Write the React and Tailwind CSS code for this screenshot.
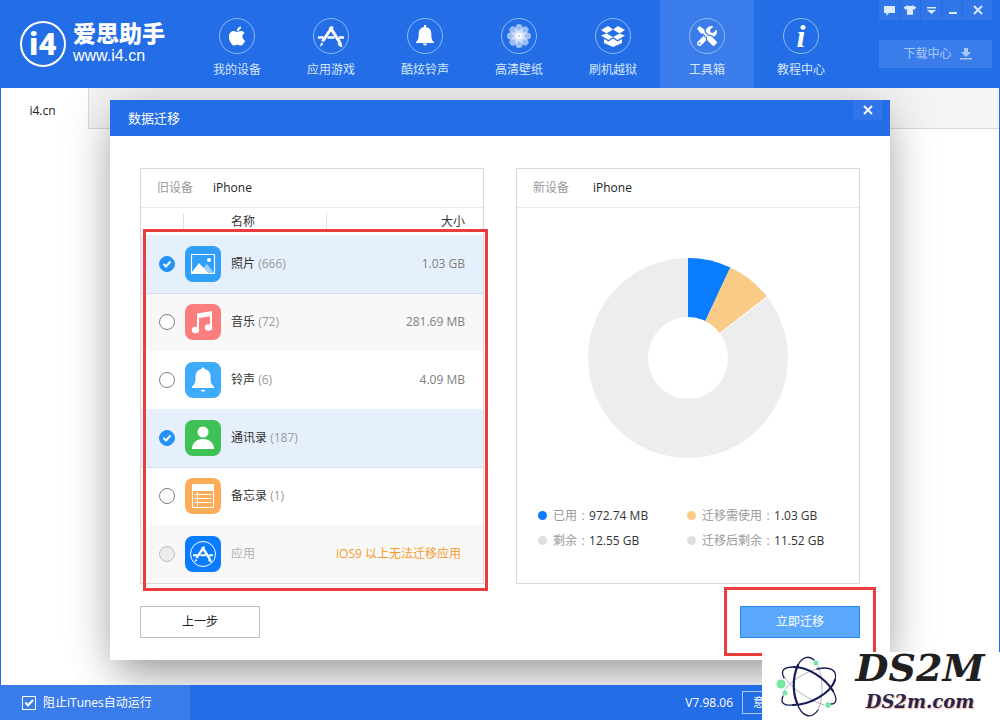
import { FaApple, FaTools, FaTshirt } from "react-icons/fa";

function AppStoreGlyph({ className }) {
  return (
    <svg viewBox="0 0 26 26" className={className} fill="none" stroke="currentColor">
      <path d="M0 14.500h5.500M9.500 14.500h7M21 14.500h5" strokeWidth="2.600" />
      <path d="M14.500 3.500 4.500 18.500" strokeWidth="3" />
      <path d="M12 4l9.500 15" strokeWidth="3.200" />
      <path d="M3 19.500l2.500 1.500L2 24z" fill="currentColor" stroke="none" />
      <path d="M19.500 20.500l3.500-2.200 1.500 5.700c-2 .2-4-1-5-3.500z" fill="currentColor" stroke="none" />
    </svg>
  );
}

function BellGlyph({ className }) {
  return (
    <svg viewBox="0 0 20 22" className={className} fill="currentColor">
      <path d="M9 0h2v2c3.500.5 5.300 3 5.300 6.500 0 5 .7 7 2.700 8.500V18H1v-1c2-1.500 2.700-3.500 2.700-8.500C3.700 5 5.500 2.500 9 2z" />
      <path d="M8 18.500h4c0 1-.8 2-2 2s-2-1-2-2z" />
    </svg>
  );
}

function FlowerGlyph() {
  const petals = [0, 45, 90, 135, 180, 225, 270, 315];
  return (
    <svg viewBox="0 0 24 24" className="w-6 h-6" fill="white">
      {petals.map((angle) => (
        <rect
          key={angle}
          x="8.500"
          y="0"
          width="7"
          height="11.500"
          rx="3.500"
          opacity="0.55"
          transform={`rotate(${angle} 12 12)`}
        />
      ))}
      <circle cx="12" cy="12" r="3" opacity="0.8" />
      <circle cx="12" cy="12" r="0.8" fill="#7fb0f5" />
    </svg>
  );
}

function BoxGlyph() {
  return (
    <svg viewBox="0 0 24 21" className="w-6 h-[21px]" fill="currentColor">
      <path d="M7 0l5 3.500-6.500 4L0 4z" />
      <path d="M17 0l-5 3.500 6.500 4L24 4z" />
      <path d="M0 9.500L5.500 7.500 12 11l-4.500 3z" />
      <path d="M24 9.500l-5.500-2L12 11l4.500 3z" />
      <path d="M3 13l4.500 2.500L12 12.500l4.500 3L21 13v4l-9 4-9-4z" />
    </svg>
  );
}

function InfoGlyph() {
  return (
    <span
      aria-hidden="true"
      className="font-['Liberation_Serif',serif] font-bold italic text-[32px] leading-8"
    >
      i
    </span>
  );
}

function CloseGlyph() {
  return (
    <svg viewBox="0 0 10 10" className="w-[10px] h-[10px]" stroke="currentColor" strokeWidth="1.800">
      <path d="M1 1l8 8M9 1L1 9" />
    </svg>
  );
}

const navItems = [
  { label: "我的设备", icon: <FaApple className="w-6 h-[22px]" /> },
  { label: "应用游戏", icon: <AppStoreGlyph className="w-[26px] h-[26px]" /> },
  { label: "酷炫铃声", icon: <BellGlyph className="w-5 h-[22px]" /> },
  { label: "高清壁纸", icon: <FlowerGlyph /> },
  { label: "刷机越狱", icon: <BoxGlyph /> },
  { label: "工具箱", icon: <FaTools className="w-5 h-5" />, active: true },
  { label: "教程中心", icon: <InfoGlyph /> },
];

const windowButtons = [
  {
    label: "消息",
    icon: (
      <svg viewBox="0 0 11 11" className="w-[11px] h-[11px]" fill="currentColor">
        <path d="M0 1h11v7H5L2.500 11V8H0z" />
      </svg>
    ),
  },
  { label: "皮肤", icon: <FaTshirt className="w-3 h-3" /> },
  {
    label: "菜单",
    icon: (
      <svg viewBox="0 0 9 9" className="w-[9px] h-[9px]" fill="currentColor">
        <path d="M0 1h9v1.500H0zM0 4h9L4.500 8z" />
      </svg>
    ),
  },
  {
    label: "最小化",
    icon: (
      <svg viewBox="0 0 9 9" className="w-[9px] h-[9px]" fill="currentColor">
        <path d="M1 6h8v2H1z" />
      </svg>
    ),
  },
  { label: "关闭", icon: <CloseGlyph />, wide: true },
];

const rows = [
  {
    id: "photos",
    name: "照片",
    count: "(666)",
    size: "1.03 GB",
    checked: true,
    tile: "bg-[#2f9ffa]",
    icon: (
      <svg viewBox="0 0 36 36" className="w-9 h-9">
        <path d="M6.500 8.500h23v19h-23z" fill="none" stroke="white" strokeWidth="1.200" />
        <path d="M18 22l4-4 7 9h-9z" fill="white" opacity="0.5" />
        <path d="M7 26l7-9 9 10H7z" fill="white" />
        <circle cx="24" cy="14" r="2" fill="white" />
      </svg>
    ),
  },
  {
    id: "music",
    name: "音乐",
    count: "(72)",
    size: "281.69 MB",
    tile: "bg-[#fb7d7d]",
    shaded: true,
    icon: (
      <svg viewBox="0 0 36 36" className="w-9 h-9" fill="white">
        <path d="M12 9.500l15-2.500v5l-13 2v12h-2zM25 9h2v14h-2z" />
        <ellipse cx="10.500" cy="26" rx="3.700" ry="3.200" />
        <ellipse cx="23.500" cy="23.500" rx="3.700" ry="3.200" />
      </svg>
    ),
  },
  {
    id: "ringtones",
    name: "铃声",
    count: "(6)",
    size: "4.09 MB",
    tile: "bg-[#3facfb]",
    icon: (
      <svg viewBox="0 0 36 36" className="w-9 h-9" fill="white">
        <path d="M18 5.500c1 0 1.500.7 1.500 1.600 4 .7 6 3.900 6 7.900 0 6 1 7.500 3.500 9.500V26H7v-1.500c2.500-2 3.500-3.500 3.500-9.500 0-4 2-7.200 6-7.900 0-.9.500-1.600 1.500-1.600z" />
        <path d="M16 28h4c0 1-.8 1.700-2 1.700s-2-.7-2-1.700z" />
      </svg>
    ),
  },
  {
    id: "contacts",
    name: "通讯录",
    count: "(187)",
    checked: true,
    tile: "bg-[#3ec155]",
    icon: (
      <svg viewBox="0 0 36 36" className="w-9 h-9" fill="white">
        <ellipse cx="18" cy="12" rx="5.500" ry="5.500" />
        <path d="M7 29c0-6 4.500-10 11-10s11 4 11 10z" />
      </svg>
    ),
  },
  {
    id: "notes",
    name: "备忘录",
    count: "(1)",
    tile: "bg-[#fbac59]",
    icon: (
      <svg viewBox="0 0 36 36" className="w-9 h-9" fill="none" stroke="white">
        <path d="M7 6h22v7H7z" fill="white" stroke="none" />
        <path d="M7.500 7v22.500h21V7" />
        <path d="M12.500 14v14M9.500 16.500h17M9.500 20.500h17M9.500 24.500h17" />
      </svg>
    ),
  },
  {
    id: "apps",
    name: "应用",
    note: "iOS9 以上无法迁移应用",
    disabled: true,
    tile: "bg-[#0a7cff]",
    shaded: true,
    icon: (
      <span className="grid place-items-center w-[26px] h-[26px] rounded-full border border-white text-white">
        <AppStoreGlyph className="w-5 h-5" />
      </span>
    ),
  },
];

const legend = [
  { label: "已用", value: "972.74 MB", dot: "bg-[#0a7cff]" },
  { label: "迁移需使用", value: "1.03 GB", dot: "bg-[#f9cb87]" },
  { label: "剩余", value: "12.55 GB", dot: "bg-[#dedede]" },
  { label: "迁移后剩余", value: "11.52 GB", dot: "bg-[#dedede]" },
];

function Header() {
  return (
    <header className="relative z-10 flex h-[88px] bg-[#236de6] text-white">
      <div className="flex items-center gap-[7px] w-[190px] pl-5">
        <div className="grid place-items-center w-[46px] h-[46px] rounded-full border-2 border-white">
          <span className="font-['Roboto',sans-serif] font-black text-[32px] leading-8">i4</span>
        </div>
        <div>
          <div className="font-['Noto_Sans_CJK_SC',sans-serif] font-black text-[23px] leading-6">
            爱思助手
          </div>
          <div className="font-['Liberation_Sans',sans-serif] text-base leading-6">www.i4.cn</div>
        </div>
      </div>

      <nav className="flex">
        {navItems.map((item) => (
          <a
            key={item.label}
            href="#"
            className={`flex flex-col items-center w-[94px] pt-[18px] ${
              item.active ? "bg-[#3a7ce9]" : ""
            }`}
          >
            <span className="grid place-items-center w-9 h-9 rounded-full border border-[#8fbcf8]">
              {item.icon}
            </span>
            <span className="mt-1.5 leading-5 text-[#d6e6fd]">{item.label}</span>
          </a>
        ))}
      </nav>

      <div className="w-[113px] ml-auto mr-2">
        <div className="flex gap-px h-5 text-[#dcebff]">
          {windowButtons.map((button) => (
            <button
              key={button.label}
              aria-label={button.label}
              className={`grid place-items-center bg-[#3176e8] ${
                button.wide ? "w-[29px]" : "w-5"
              }`}
            >
              {button.icon}
            </button>
          ))}
        </div>
        <button className="flex items-center justify-center gap-2 w-full h-7 pl-1 mt-5 bg-[#3a7ce9] text-[#a9c9f8]">
          下载中心
          <svg viewBox="0 0 12 12" className="w-3 h-3" fill="currentColor">
            <path d="M4 0h4v4h3L6 9 1 4h3zM0 10h12v1.500H0z" />
          </svg>
        </button>
      </div>
    </header>
  );
}

function PanelHeader({ label, device, className }) {
  return (
    <div className={`flex items-center h-[39px] pl-4 border-b border-[#ebebeb] ${className}`}>
      <span className="text-[#999999]">{label}</span>
      <span className="text-[#222222]">{device}</span>
    </div>
  );
}

function RoundCheckbox({ id, checked, disabled }) {
  return (
    <span className="grid w-4 h-4 ml-[18px]">
      <input
        id={id}
        type="checkbox"
        defaultChecked={checked}
        disabled={disabled}
        className="peer col-start-1 row-start-1 appearance-none w-4 h-4 rounded-full border border-[#808080] bg-white checked:border-[#2491f7] checked:bg-[#2491f7] disabled:border-[#bdbdbd] disabled:bg-[#ececec]"
      />
      <svg
        viewBox="0 0 16 16"
        className="col-start-1 row-start-1 w-4 h-4 invisible peer-checked:visible pointer-events-none"
        fill="none"
        stroke="white"
        strokeWidth="2"
      >
        <path d="M4.500 8l2.500 2.500 4.500-5" />
      </svg>
    </span>
  );
}

function rowColor(row) {
  if (row.checked) return "bg-[#e6f0fc] border-b border-[#cfe0f0]";
  if (row.shaded) return "bg-[#f8f8f8]";
  return "bg-white";
}

function OldDevice() {
  return (
    <section className="relative">
      <div className="border border-[#d9d9d9]">
        <PanelHeader label="旧设备" device="iPhone" className="gap-5" />
        <table className="w-full table-fixed border-collapse">
          <thead>
            <tr className="h-[27px] text-[#333333]">
              <th className="w-[43px] p-0">
                <div className="h-[18px] border-r border-[#e0e0e0]" />
              </th>
              <th className="w-[143px] p-0 font-normal text-left">
                <div className="h-[18px] pl-[47px] leading-[18px] border-r border-[#e0e0e0]">名称</div>
              </th>
              <th className="p-0 pr-[18px] font-normal text-right">大小</th>
            </tr>
          </thead>
          <tbody>
            {rows.map((row) => (
              <tr key={row.id} className={`h-[58px] ${rowColor(row)}`}>
                <td className="p-0">
                  <RoundCheckbox id={row.id} checked={row.checked} disabled={row.disabled} />
                </td>
                <td className="p-0">
                  <label htmlFor={row.id} className="flex items-center pl-px">
                    <span className={`grid place-items-center w-9 h-9 mr-[10px] rounded-lg ${row.tile}`}>
                      {row.icon}
                    </span>
                    <span className={row.disabled ? "text-[#b0b0b0]" : "text-[#333333]"}>
                      {row.name} <span className="text-[#999999]">{row.count}</span>
                    </span>
                  </label>
                </td>
                {row.note ? (
                  <td className="p-0 pr-[22px] text-right text-[#f79a2b]">{row.note}</td>
                ) : (
                  <td className="p-0 pr-[18px] text-right text-[#808080]">{row.size}</td>
                )}
              </tr>
            ))}
          </tbody>
        </table>
      </div>
      {/* Highlight frame */}
      <div className="absolute top-[61px] left-[3px] -right-1 -bottom-[7px] border-3 border-[#e93c3c] pointer-events-none" />
    </section>
  );
}

function NewDevice() {
  return (
    <section className="border border-[#d9d9d9]">
      <PanelHeader label="新设备" device="iPhone" className="gap-6" />
      <svg viewBox="0 0 200 200" className="w-[200px] h-[200px] mx-auto mt-[50px]">
        <circle cx="100" cy="100" r="100" fill="#ededed" />
        <path d="M100 100V0A100 100 0 0 1 142.300 9.400z" fill="#0a7cff" />
        <path d="M100 100L142.300 9.400A100 100 0 0 1 178.800 38.400z" fill="#f9cb87" />
        <path d="M100 100L179 38.800" stroke="white" strokeWidth="1" />
        <ellipse cx="100" cy="100" rx="40" ry="41" fill="white" />
      </svg>
      <ul className="grid grid-cols-[149px_1fr] mt-[45px] pl-[21px]">
        {legend.map((item) => (
          <li key={item.label} className="flex items-center h-[25px]">
            <span className={`w-[9px] h-[9px] mr-1.5 rounded-full ${item.dot}`} />
            <span className="text-[#999999]">{item.label}</span>
            <span className="w-3 text-center text-[#999999]">:</span>
            <span className="text-[#333333]">{item.value}</span>
          </li>
        ))}
      </ul>
    </section>
  );
}

function MigrationDialog() {
  return (
    <div
      role="dialog"
      aria-label="数据迁移"
      className="col-start-1 row-start-1 self-start w-full max-w-[780px] mx-auto mt-3 mb-[25px] bg-white shadow-[0_0_50px_rgba(0,0,0,0.14),0_20px_40px_-8px_rgba(0,0,0,0.35)]"
    >
      <div className="flex justify-between h-9 pl-[18px] pr-2 bg-[#236de6] text-white">
        <h1 className="text-[13px] leading-9">数据迁移</h1>
        <button aria-label="关闭" className="grid place-items-center w-[29px] h-5 bg-[#3176e8]">
          <CloseGlyph />
        </button>
      </div>

      <div className="px-[30px] pt-8 pb-[22px]">
        <div className="grid grid-cols-2 gap-8">
          <OldDevice />
          <NewDevice />
        </div>

        {/* Actions */}
        <div className="flex justify-between mt-[22px]">
          <button className="w-[120px] h-8 border border-[#bfbfbf] text-[#222222]">上一步</button>
          <div className="relative">
            <button className="w-[120px] h-8 border border-[#2b8af0] bg-[#5aa8fe] text-white">
              立即迁移
            </button>
            <div className="absolute -top-[19px] -bottom-[18px] -inset-x-4 border-3 border-[#e93c3c] pointer-events-none" />
          </div>
        </div>
      </div>
    </div>
  );
}

function Footer() {
  return (
    <footer className="relative z-10 flex items-center justify-between h-[35px] bg-[#236de6] text-white">
      <label className="flex items-center gap-[7px] w-[190px] h-full pl-[22px] bg-[#3a7ce9]">
        <span className="grid w-[14px] h-[14px]">
          <input
            type="checkbox"
            defaultChecked
            className="peer col-start-1 row-start-1 appearance-none w-[14px] h-[14px] border border-white"
          />
          <svg
            viewBox="0 0 14 14"
            className="col-start-1 row-start-1 w-[14px] h-[14px] invisible peer-checked:visible"
            fill="none"
            stroke="white"
            strokeWidth="2"
          >
            <path d="M3.500 6.500L6 9.500l5-5.500" />
          </svg>
        </span>
        阻止iTunes自动运行
      </label>
      <div className="flex items-center gap-[9px] mr-[186px]">
        <span>V7.98.06</span>
        <button className="w-[72px] h-[23px] pl-[10px] border border-[#a9c9f8] text-left">意</button>
      </div>
    </footer>
  );
}

function Watermark() {
  return (
    <div className="absolute z-20 right-0 bottom-0 flex items-center w-[238px] h-[68px] pl-[14px] bg-white">
      <svg
        viewBox="0 0 64 64"
        className="w-16 h-16 shrink-0"
        fill="none"
        stroke="#191b55"
        strokeLinecap="round"
      >
        {/* Far side of the orbits */}
        <g stroke="#b3b0bd">
          <path d="M7 39C10 31 24 20 41 15" />
          <path d="M8 22C13 32 30 45 48 51" />
          <path d="M42 12C48 26 47 46 42 56" />
        </g>
        <g strokeWidth="1.300">
          <path d="M22 11C26 3 33 1 38 6" />
          <path d="M42 56C36 65 26 64 21 49" />
          <path d="M41 15C54 12 62 16 59 26" />
          <path d="M7 42C4 49 8 52 17 51" />
          <path d="M57 37C62 46 60 50 55 50" />
          <path d="M8 24C4 16 8 13 18 13" />
        </g>
        <g strokeWidth="2.200">
          <path d="M22 11C16 24 17 39 21 49" />
          <path d="M18 13C32 13 49 24 57 37" />
          <path d="M59 26C55 39 34 51 17 51" />
        </g>
        <g fill="#72e8a0" stroke="none">
          <circle cx="5" cy="30" r="4.500" />
          <circle cx="9" cy="39" r="2.500" />
          <circle cx="40" cy="9" r="2.500" />
          <circle cx="52" cy="51" r="2.700" />
        </g>
      </svg>
      <div className="grow text-center font-['DejaVu_Serif',serif] font-bold italic">
        <div className="text-[38px] leading-8 text-[#202020]">DS2M</div>
        <div className="text-lg leading-9 text-[#2a2350] [text-shadow:1px_1px_1px_#f0b8a0]">DS2m.com</div>
      </div>
    </div>
  );
}

export default function App() {
  return (
    <div className="relative flex flex-col min-h-screen overflow-hidden bg-white font-['Open_Sans','Noto_Sans_CJK_SC',sans-serif] text-xs">
      <Header />
      <main className="grid flex-1 border-x border-[#236de6]">
        <div className="col-start-1 row-start-1">
          <div className="flex h-[41px] border-b border-[#d9d9d9] bg-[#f4f4f4]">
            <a
              href="#"
              className="w-[88px] h-[41px] pr-1 border-r border-[#d9d9d9] bg-white text-center leading-[45px] text-[#222222]"
            >
              i4.cn
            </a>
          </div>
        </div>
        <MigrationDialog />
      </main>
      <Footer />
      <Watermark />
    </div>
  );
}
